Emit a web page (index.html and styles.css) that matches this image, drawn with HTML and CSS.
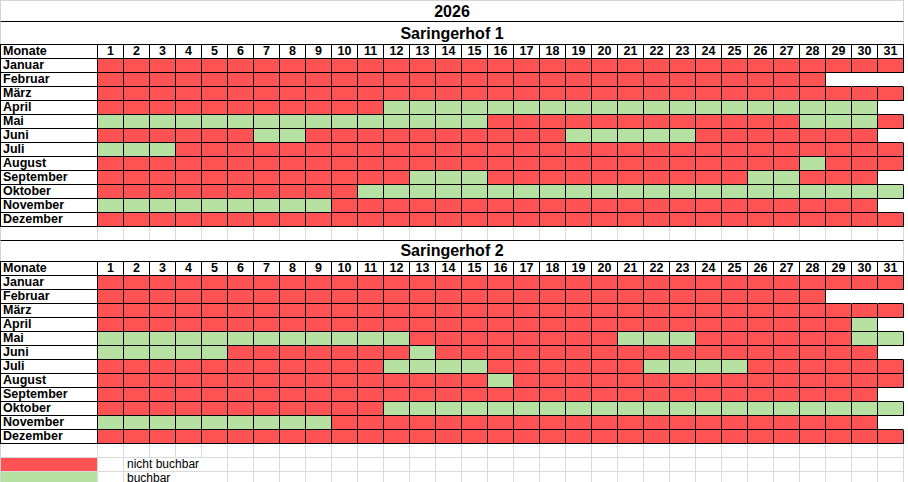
FILE: index.html
```html
<!DOCTYPE html>
<html lang="de">
<head>
<meta charset="utf-8">
<title>Belegung 2026</title>
<link rel="stylesheet" href="styles.css">
</head>
<body>
<div class="sheet">
  <div class="title year">2026</div>
  <div class="title house first">Saringerhof 1</div>
  <div class="cal" id="h1"></div>
  <div class="gaprow short" data-n="32"></div>
  <div class="title house boxed">Saringerhof 2</div>
  <div class="cal" id="h2"></div>
  <div class="gaprow" data-n="32"></div>
  <div class="legrow">
    <div class="e swatch red"></div>
    <div class="e"></div>
    <div class="e legtext">nicht buchbar</div>
    <div class="fill" data-n="26"></div>
  </div>
  <div class="legrow">
    <div class="e swatch green"></div>
    <div class="e"></div>
    <div class="e legtext">buchbar</div>
    <div class="fill" data-n="26"></div>
  </div>
</div>
<script src="script.js"></script>
</body>
</html>
```
FILE: styles.css
```css
body {
  margin: 0;
  background: #ffffff;
  font-family: "Liberation Sans", Arial, sans-serif;
  color: #000;
}

.sheet {
  width: 904px;
}

.title {
  box-sizing: border-box;
  border-left: 1px solid #d4d4d4;
  border-right: 1px solid #d4d4d4;
  text-align: center;
  font-weight: bold;
  font-size: 16px;
  line-height: 18px;
}

.year {
  height: 22px;
  padding-top: 2px;
  border-top: 1px solid #d4d4d4;
  border-bottom: 1px solid #000;
}

.house.first {
  height: 22px;
  padding-top: 3px;
}

.house.boxed {
  height: 21px;
  padding-top: 1px;
  border-top: 1px solid #000;
}

.cal {
  display: grid;
  grid-template-columns: 97px repeat(31, 26px);
  grid-auto-rows: 14px;
  border-left: 1px solid #000;
  border-top: 1px solid #000;
}

.c {
  box-sizing: border-box;
  border-right: 1px solid #000;
  border-bottom: 1px solid #000;
  font-weight: bold;
  font-size: 12.5px;
  line-height: 13px;
  white-space: nowrap;
  overflow: hidden;
}

.c.lbl {
  padding-left: 2px;
  background: #fff;
}

.c.num {
  text-align: center;
  background: #fff;
}

.c.r {
  background: #ff5252;
}

.c.g {
  background: #b7e1a1;
}

.c.x {
  background: #fff;
  border-right-color: transparent;
}

.gaprow,
.legrow {
  display: grid;
  grid-template-columns: 97px repeat(31, 26px);
  grid-auto-rows: 14px;
  border-left: 1px solid #d4d4d4;
}

.gaprow.short {
  grid-auto-rows: 13px;
}

.gaprow .e {
  border-bottom: 1px solid #dadada;
}

.gaprow.short .e {
  border-bottom: none;
}

.e {
  box-sizing: border-box;
  border-right: 1px solid #dadada;
}

.legrow .e {
  border-bottom: 1px solid #dadada;
}

.fill {
  display: contents;
}

.swatch.red {
  background: #ff5252;
}

.swatch.green {
  background: #b7e1a1;
}

.legtext {
  grid-column: span 4;
  padding-left: 3px;
  font-size: 12px;
  line-height: 13px;
  white-space: nowrap;
}
```
FILE: script.js
```js
(function () {
  var months = ["Januar", "Februar", "März", "April", "Mai", "Juni", "Juli",
    "August", "September", "Oktober", "November", "Dezember"];

  var houses = {
    h1: [
      "R31", "R28 _3", "R31", "R11 G19 _1", "G15 R12 G3 R1", "R6 G2 R10 G5 R7 _1",
      "G3 R28", "R27 G1 R3", "R12 G3 R10 G2 R3 _1", "R10 G21", "G9 R21 _1", "R31"
    ],
    h2: [
      "R31", "R28 _3", "R31", "R29 G1 _1", "G12 R8 G3 R6 G2", "G5 R7 G1 R17 _1",
      "R11 G4 R6 G4 R6", "R15 G1 R15", "R30 _1", "R11 G20", "G9 R21 _1", "R31"
    ]
  };

  function expand(s) {
    var out = [];
    s.split(" ").forEach(function (t) {
      var k = t.charAt(0), n = parseInt(t.slice(1), 10);
      for (var i = 0; i < n; i++) out.push(k);
    });
    return out;
  }

  function cell(cls, txt) {
    var d = document.createElement("div");
    d.className = "c " + cls;
    if (txt !== undefined) d.textContent = txt;
    return d;
  }

  var map = { R: "r", G: "g", _: "x" };

  Object.keys(houses).forEach(function (id) {
    var g = document.getElementById(id);
    g.appendChild(cell("lbl", "Monate"));
    for (var d = 1; d <= 31; d++) g.appendChild(cell("num", String(d)));
    houses[id].forEach(function (row, m) {
      g.appendChild(cell("lbl", months[m]));
      expand(row).forEach(function (k) { g.appendChild(cell(map[k])); });
    });
  });

  document.querySelectorAll(".gaprow, .fill").forEach(function (el) {
    var n = parseInt(el.getAttribute("data-n"), 10);
    for (var i = 0; i < n; i++) {
      var e = document.createElement("div");
      e.className = "e";
      el.appendChild(e);
    }
  });
})();
```
